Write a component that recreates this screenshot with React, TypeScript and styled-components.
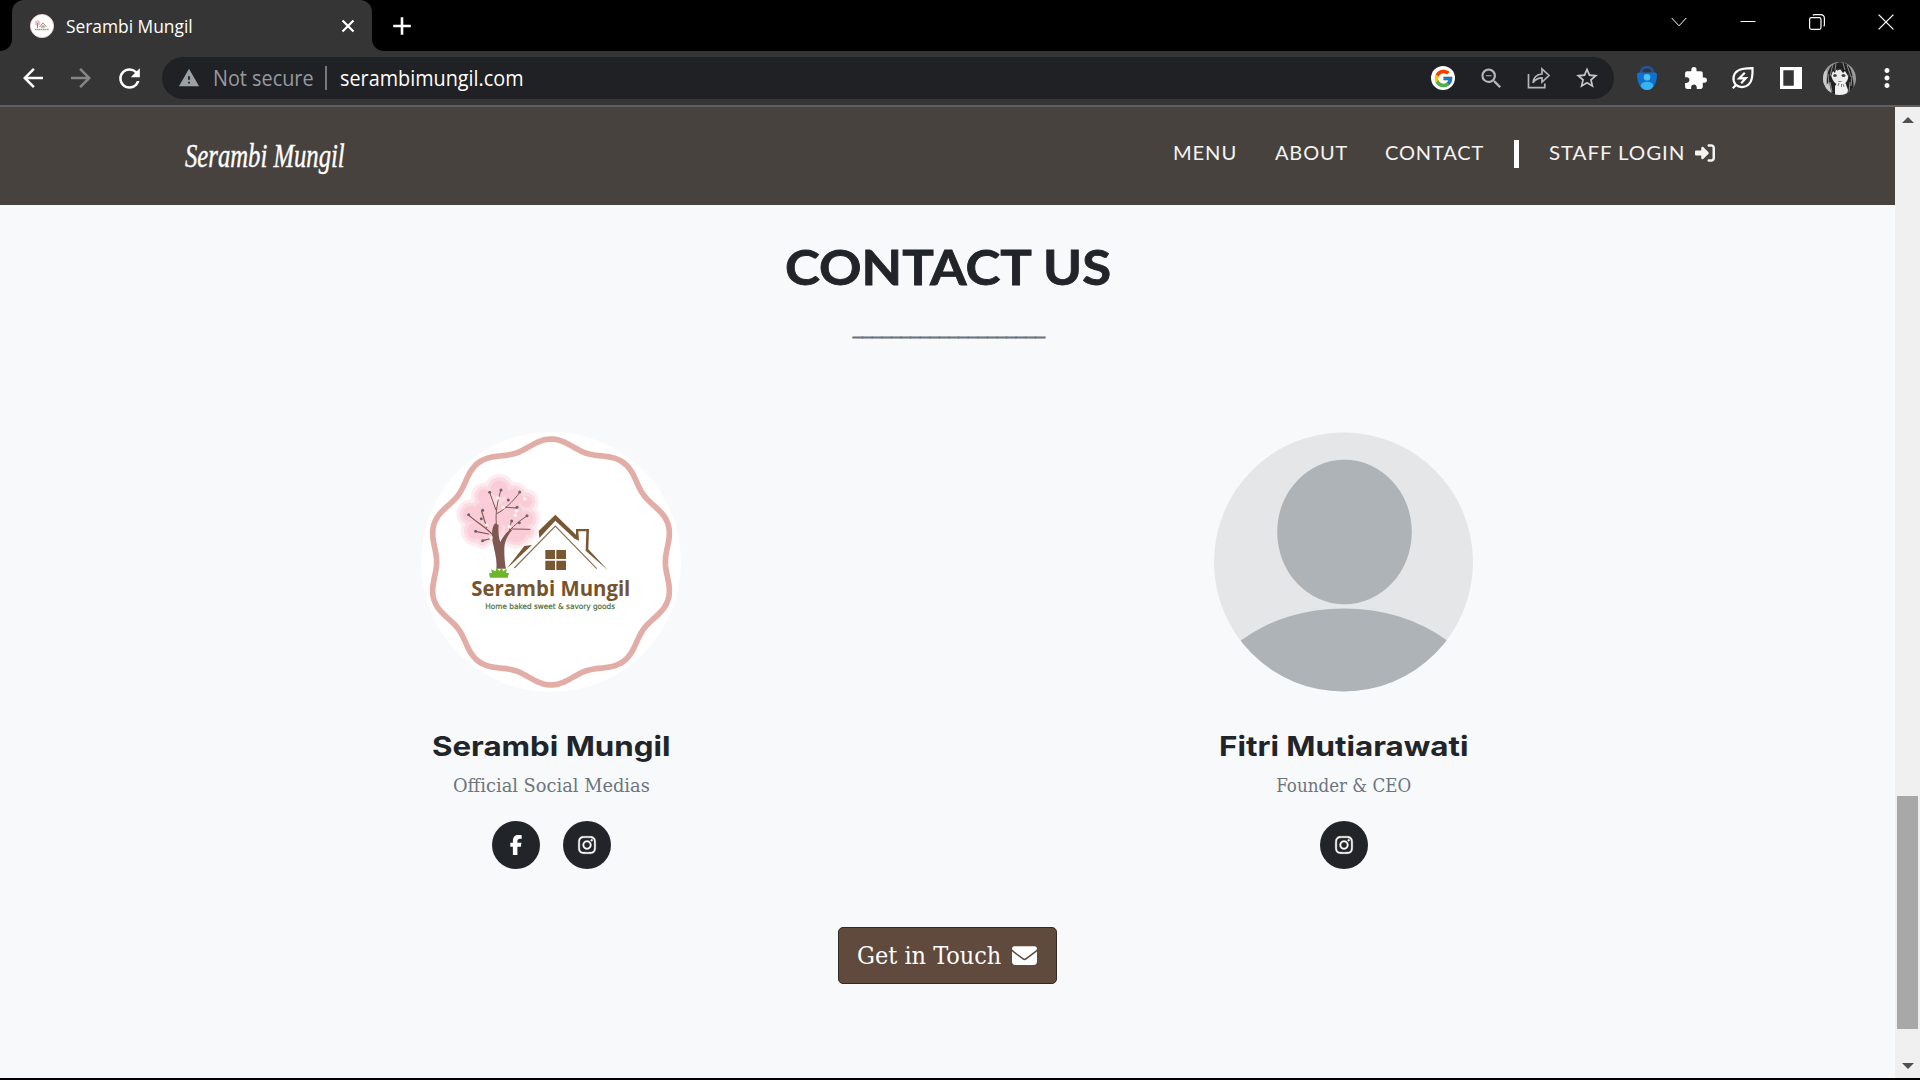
import React, { useLayoutEffect, useRef, useState } from 'react';
import styled, { createGlobalStyle } from 'styled-components';
import { MdArrowBack, MdArrowForward, MdRefresh, MdWarning, MdZoomOut, MdStarBorder, MdExtension, MdMoreVert } from 'react-icons/md';
import { FcGoogle } from 'react-icons/fc';
import { FaFacebookF, FaInstagram, FaEnvelope, FaRightToBracket } from 'react-icons/fa6';

const Global = createGlobalStyle`
  * { box-sizing: border-box; }
  body { margin: 0; background: #000; overflow: hidden; }
`;

const ui = `'Open Sans', 'Noto Sans', sans-serif`;
const display = `Lato, 'Open Sans', sans-serif`;
const slab = `'DejaVu Serif Condensed', 'DejaVu Serif', serif`;

/* Text that is stretched or condensed to an exact width */
const FitBox = styled.span<{ $w: number }>`
  display: inline-block;
  width: ${p => p.$w}px;
  text-align: left;
  white-space: nowrap;
`;
const FitInner = styled.span`
  display: inline-block;
  transform-origin: 0 50%;
`;
function Fit({ w, children }: { w: number; children: React.ReactNode }) {
  const ref = useRef<HTMLSpanElement>(null);
  const [scale, setScale] = useState(1);
  useLayoutEffect(() => {
    if (ref.current) setScale(w / ref.current.offsetWidth);
  }, [w]);
  return (
    <FitBox $w={w}>
      <FitInner ref={ref} style={{ transform: `scaleX(${scale})` }}>{children}</FitInner>
    </FitBox>
  );
}

const Window = styled.div`
  width: 1920px;
  height: 1080px;
  display: flex;
  flex-direction: column;
  background: #000;
  font-family: ${ui};
`;

/* ---- Tab strip ---- */
const TabStrip = styled.div`
  height: 51px;
  display: flex;
  flex: none;
`;
const Flare = styled.div<{ $side: 'left' | 'right' }>`
  width: 12px;
  height: 12px;
  align-self: flex-end;
  background: radial-gradient(circle at ${p => (p.$side === 'left' ? '0 0' : '100% 0')}, #000 11.5px, #353535 12.5px);
`;
const Tab = styled.div`
  width: 360px;
  display: flex;
  align-items: center;
  padding: 1px 17px 0 18px;
  background: #353535;
  border-radius: 12px 12px 0 0;
  color: #fff;
  font-size: 17.5px;
  line-height: 24px;
`;
const Favicon = styled.svg`
  width: 24px;
  height: 24px;
  margin-right: 11.5px;
`;
const TabTitle = styled.div`
  flex: 1;
`;
const NewTab = styled.div`
  width: 42px;
  display: grid;
  place-items: center;
`;
const Controls = styled.div`
  display: flex;
  margin-left: auto;
  height: 43px;
`;
const Control = styled.div`
  width: 69px;
  display: grid;
  place-items: center;
`;

/* ---- Toolbar ---- */
const Toolbar = styled.div`
  height: 56px;
  flex: none;
  display: flex;
  align-items: center;
  padding: 0 9px;
  background: #353535;
  border-bottom: 2px solid #5f5f5f;
`;
const IconCell = styled.div<{ $color?: string }>`
  width: 48px;
  height: 42px;
  display: grid;
  place-items: center;
  color: ${p => p.$color || '#fff'};
`;
const TabCell = styled.div`
  width: 36px;
  height: 42px;
  margin-right: 6px;
  display: grid;
  place-items: center;
  color: #fff;
`;
const Omnibox = styled.div`
  flex: 1;
  height: 42px;
  margin: 0 9px;
  padding: 0 3px 0 16px;
  display: flex;
  align-items: center;
  border-radius: 21px;
  background: #202124;
  font-size: 21px;
  line-height: 28px;
  color: #fff;
`;
const NotSecure = styled.div`
  margin-left: 13px;
  color: #969ba0;
`;
const Separator = styled.div`
  width: 2px;
  height: 24px;
  margin: 0 13px 0 11px;
  background: #77797c;
`;
const Url = styled.div`
  flex: 1;
`;
const GoogleDisc = styled.div`
  width: 24px;
  height: 24px;
  border-radius: 50%;
  background: #fff;
  display: grid;
  place-items: center;
`;

/* ---- Page ---- */
const Viewport = styled.div`
  height: 971px;
  display: flex;
`;
const Page = styled.main`
  flex: 1;
  background: #f8f9fb;
  display: flex;
  flex-direction: column;
  align-items: center;
`;
const Navbar = styled.header`
  width: 100%;
  height: 98px;
  flex: none;
  padding: 0 181px 0 185px;
  display: flex;
  justify-content: space-between;
  background: #48423e;
  color: #fff;
`;
const Brand = styled.div`
  padding-top: 27px;
  font: italic 33px/44px 'Liberation Serif', serif;
  -webkit-text-stroke: 0.4px #fff;
`;
const Nav = styled.nav`
  height: 28px;
  margin-top: 32px;
  display: flex;
  font: 400 18.6px/28px ${display};
  letter-spacing: 0.8px;
  color: #f4f3f2;
`;
const NavItem = styled.a<{ $gap: number }>`
  display: flex;
  align-items: center;
  margin-right: ${p => p.$gap}px;
`;
const NavBar = styled.div`
  width: 5px;
  height: 28px;
  margin: 1px 30px 0 0;
  background: #fff;
`;
const IconGap = styled.span`
  display: flex;
  margin-left: 10px;
`;
const Title = styled.h2`
  margin: 33px 0 0;
  font: 700 47px/58px ${display};
  -webkit-text-stroke: 0.8px #212529;
  color: #212529;
`;
const Rule = styled.div`
  margin: 19px 0 0 3px;
  font: 19.2px/29px 'Liberation Serif', serif;
  -webkit-text-stroke: 1px #6c757d;
  color: #6c757d;
`;
const Team = styled.section`
  width: 1585px;
  margin-top: 88px;
  display: grid;
  grid-template-columns: 1fr 1fr;
`;
const Member = styled.article`
  display: flex;
  flex-direction: column;
  align-items: center;
`;
const Portrait = styled.svg`
  width: 260px;
  height: 260px;
  display: block;
`;
const Name = styled.h4`
  margin: 37px 0 0;
  font: 700 27.6px/34px Inter, ${display};
  color: #212529;
`;
const Role = styled.p`
  margin: 8px 0 0;
  font: 18.6px/29px ${slab};
  color: #6c757d;
`;
const Socials = styled.div`
  margin-top: 21px;
  display: flex;
  gap: 23px;
`;
const Social = styled.a`
  width: 48px;
  height: 48px;
  border-radius: 50%;
  display: grid;
  place-items: center;
  background: #212529;
  color: #fff;
`;
const Cta = styled.a`
  width: 219px;
  height: 57px;
  margin-top: 58px;
  display: flex;
  align-items: center;
  justify-content: space-between;
  padding: 0 19px 0 18px;
  border: 1px solid #342a24;
  border-radius: 5px;
  background: #5f4a3d;
  color: #fff;
  font: 23.6px/36px ${slab};
`;

/* ---- Scrollbar ---- */
const Scrollbar = styled.div`
  width: 25px;
  display: flex;
  flex-direction: column;
  align-items: center;
  background: #f0f0f0;
`;
const Arrow = styled.div<{ $down?: boolean }>`
  margin: ${p => (p.$down ? 'auto 0 9px' : '10px 0 0')};
  border: 6px solid transparent;
  border-top: ${p => (p.$down ? '6px solid #505050' : '0')};
  border-bottom: ${p => (p.$down ? '0' : '6px solid #505050')};
`;
const Thumb = styled.div`
  width: 21px;
  height: 233px;
  margin-top: 673px;
  background: #a8a8a8;
`;

const badgePath = (() => {
  const pts: string[] = [];
  for (let i = 0; i < 360; i += 2) {
    const a = (i * Math.PI) / 180;
    const r = 356 + 13 * Math.cos(10 * a);
    pts.push(`${(455 + r * Math.sin(a)).toFixed(1)} ${(456 - r * Math.cos(a)).toFixed(1)}`);
  }
  return `M${pts.join('L')}Z`;
})();

const blobs = [[300, 238, 38], [255, 258, 32], [345, 262, 38], [380, 275, 30], [215, 312, 36], [260, 310, 50], [330, 310, 52], [380, 325, 34], [230, 362, 38], [350, 362, 46], [275, 350, 46], [385, 365, 22], [250, 387, 22]];
const buds = [[271, 247], [305, 240], [361, 246], [353, 292], [208, 314], [250, 301], [246, 326], [383, 317], [360, 338], [229, 364], [250, 392], [327, 270], [337, 333]];
const petals = [[376, 266], [296, 264], [352, 303], [275, 383], [330, 350], [262, 345], [312, 292], [348, 316]];

function Artwork() {
  return (
    <>
      <g>
        {blobs.map(([x, y, r], i) => <circle key={i} cx={x} cy={y} r={r + 8} fill="#fdecf0" />)}
        {blobs.map(([x, y, r], i) => <circle key={i} cx={x} cy={y} r={r - 2} fill="#fbdbe3" />)}
        {blobs.map(([x, y, r], i) => <circle key={i} cx={x} cy={y} r={r - 12} fill="#f9ccd7" />)}
      </g>
      <path d="M291 476C294 450 286 425 280 395C276 370 278 350 287 340L298 345C296 365 298 385 303 396C310 380 322 368 335 358L338 361C322 378 314 400 315 420C315 445 317 460 320 476Z" fill="#7d5750" />
      <g fill="none" stroke="#7d5750" strokeLinecap="round">
        <path d="M292 350C288 320 290 290 304 242M290 300L272 250M294 310C315 300 340 275 361 248M318 292L352 294" strokeWidth="3" />
        <path d="M283 378C262 352 235 340 209 316M262 352L247 304M268 372L228 364M280 384L250 392" strokeWidth="3.6" />
        <path d="M320 372C342 350 355 335 383 318M338 357L392 358M330 362L336 334" strokeWidth="3" />
      </g>
      {buds.map(([x, y], i) => <circle key={i} cx={x} cy={y} r="4.5" fill="#6c666c" />)}
      {petals.map(([x, y], i) => <circle key={i} cx={x} cy={y} r="5.5" fill="#fff3ee" />)}
      <path d="M272 503L269 490L278 489L275 478L288 484L292 474L300 483L308 472L311 484L323 476L320 488L329 490L325 503Z" fill="#6db52b" />
      <path d="M418 363L468 314L530 374V357H569L567 418L626 481L559 422L561 364H537L539 392L526 386L468 332L420 384Z" fill="#7a5733" />
      <path d="M322 476L375 408L398 405Z" fill="#7a5733" />
      <path d="M345 474L468 348L592 476" fill="none" stroke="#8b6e50" strokeWidth="3.5" />
      <path d="M438 420h29v27h-29zM471 420h29v27h-29zM438 452h29v28h-29zM471 452h29v28h-29z" fill="#7a5733" />
      <text x="216" y="557" fontFamily="Open Sans, sans-serif" fontWeight="700" fontSize="66" fill="#75532f" textLength="477" lengthAdjust="spacingAndGlyphs">Serambi Mungil</text>
      <text x="258" y="596" fontFamily="DejaVu Sans, sans-serif" fontSize="23" fill="#4b6f3a" stroke="#4b6f3a" strokeWidth=".6" textLength="389" lengthAdjust="spacingAndGlyphs">Home baked sweet &amp; savory goods</text>
    </>
  );
}

function Badge() {
  return (
    <Portrait viewBox="65 66 780 780">
      <circle cx="455" cy="456" r="390" fill="#fff" />
      <path d={badgePath} fill="none" stroke="#e2ada6" strokeWidth="17" strokeLinejoin="round" />
      <Artwork />
    </Portrait>
  );
}

function Placeholder() {
  return (
    <Portrait viewBox="0 0 260 260">
      <defs><clipPath id="disc"><circle cx="129.5" cy="130" r="129.5" /></clipPath></defs>
      <g clipPath="url(#disc)">
        <rect width="260" height="260" fill="#e4e6e8" />
        <ellipse cx="130.5" cy="100" rx="67.3" ry="72.3" fill="#aeb3b7" />
        <ellipse cx="130" cy="286" rx="146" ry="109.5" fill="#aeb3b7" />
      </g>
    </Portrait>
  );
}

function Line({ size, w = 1.4, d }: { size: number; w?: number; d: string }) {
  return (
    <svg width={size} height={size} viewBox={`0 0 ${size} ${size}`} fill="none" stroke="currentColor" strokeWidth={w}>
      <path d={d} />
    </svg>
  );
}

const instagram = <Social><FaInstagram size={20} stroke="#fff" strokeWidth={8} /></Social>;

export default function App() {
  return (
    <Window>
      <Global />
      <TabStrip>
        <Flare $side="left" />
        <Tab>
          <Favicon viewBox="0 0 24 24">
            <circle cx="12" cy="12" r="11.6" fill="#fff" stroke="#edd3d0" strokeWidth=".8" />
            <circle cx="7.5" cy="9" r="2.8" fill="#eec3cb" />
            <path d="M7.5 9v5M9.5 13l3.5-4 3.5 4M12 14v-2h2v2" stroke="#927a68" strokeWidth=".9" fill="none" />
            <path d="M5 15.5h14" stroke="#a79683" strokeWidth="1.5" strokeDasharray="1.5 .4" />
          </Favicon>
          <TabTitle><Fit w={127}>Serambi Mungil</Fit></TabTitle>
          <Line size={14} w={2.2} d="M1.5 1.5L12.5 12.5M12.5 1.5L1.5 12.5" />
        </Tab>
        <Flare $side="right" />
        <NewTab><TabCell><Line size={20} w={2.6} d="M10 1.2V18.8M1.2 10H18.8" /></TabCell></NewTab>
        <Controls>
          <Control><IconCell><Line size={16} w={1} d="M.7 4L8 11.8L15.3 4" /></IconCell></Control>
          <Control><IconCell><Line size={16} w={1} d="M.5 7.5H15.5" /></IconCell></Control>
          <Control><IconCell><Line size={16} w={1.2} d="M2.4 3.7H10.2Q12 3.7 12 5.5V13.5Q12 15.3 10.2 15.3H2.4Q.6 15.3 .6 13.5V5.5Q.6 3.7 2.4 3.7ZM3.8 1.2Q4.5 .6 5.5 .6H11.5Q15.4 .6 15.4 4.5V10.5Q15.4 11.8 14.7 12.4" /></IconCell></Control>
          <Control><IconCell><Line size={16} w={1.3} d="M.6 .6L15.4 15.4M15.4 .6L.6 15.4" /></IconCell></Control>
        </Controls>
      </TabStrip>

      <Toolbar>
        <IconCell><MdArrowBack size={30} /></IconCell>
        <IconCell $color="#868686"><MdArrowForward size={30} /></IconCell>
        <IconCell><MdRefresh size={31} /></IconCell>
        <Omnibox>
          <MdWarning size={22} color="#9aa0a6" />
          <NotSecure><Fit w={101}>Not secure</Fit></NotSecure>
          <Separator />
          <Url><Fit w={184}>serambimungil.com</Fit></Url>
          <IconCell><GoogleDisc><FcGoogle size={21} /></GoogleDisc></IconCell>
          <IconCell $color="#b4b5b7"><MdZoomOut size={27} /></IconCell>
          <IconCell $color="#b4b5b7">
            <Line size={24} w={1.7} d="M1.500 8V21.700H17.800V17.500M6 16.800C6.600 10.800 9.600 8.400 15 8V3L22 9.500L15 16V11.800C11 11.800 8.500 13 6 16.800Z" />
          </IconCell>
          <IconCell $color="#c4c5c6"><MdStarBorder size={26} /></IconCell>
        </Omnibox>
        <IconCell>
          <svg width="20" height="24" viewBox="0 0 20 24">
            <path d="M4 8V6.500a6 5.500 0 0 1 12 0V8" fill="none" stroke="#24549b" strokeWidth="2.600" />
            <path d="M2 6.500H18Q20 6.500 20 8.500C20 16 17 24 10 24S0 16 0 8.500Q0 6.500 2 6.500Z" fill="#1070cc" />
            <circle cx="10" cy="11.200" r="3.300" fill="#4fc0f4" />
            <path d="M3.600 20C4 17 7 15.800 10 15.800S16 17 16.400 20C15 22.500 13 24 10 24S5 22.500 3.600 20Z" fill="#37b3f0" />
          </svg>
        </IconCell>
        <IconCell><MdExtension size={25} /></IconCell>
        <IconCell>
          <Line size={24} w={2.2} d="M1.800 22.200L5 19M4.600 18.700C1 14 2 7.500 7 4.600C11 2.300 16 2.200 21.500 2.200C21.600 7 21.800 12 19.500 16C16 21.800 9 22.500 4.600 18.700M13.800 6.800L8.300 12.300L14.800 12.100L10.200 17.200" />
        </IconCell>
        <IconCell>
          <svg width="22" height="22" viewBox="0 0 22 22"><path fillRule="evenodd" d="M0 0H22V22H0ZM3.300 3.300V18.700H13.800V3.300Z" fill="#fff" /></svg>
        </IconCell>
        <IconCell>
          <svg width="33" height="33" viewBox="0 0 33 33">
            <defs><clipPath id="me"><circle cx="16.500" cy="16.500" r="16.500" /></clipPath></defs>
            <g clipPath="url(#me)">
              <rect width="33" height="33" fill="#9a9a9a" />
              <path d="M5 33C3 20 3 6 11 2S27 1 29 12C31 20 31 28 29 33Z" fill="#222" />
              <path d="M0 10L4 8L3 24L0 22ZM2 24L6 20L9 33H3Z" fill="#c9c9c9" />
              <path d="M8 11C10 7 23 6 25 11C26 17 24 21 18 24C12 23 8 17 8 11Z" fill="#ececec" />
              <path d="M12 24L15 20L22 20L25 28L24 33H12Z" fill="#f1f1f1" />
              <path d="M8 14V7L14 3L12 11L10 9ZM14 9L16 3L18 8L20 3L26 9L25 14L22 9L20 11L17 7Z" fill="#222" />
              <ellipse cx="12" cy="13.500" rx="1.800" ry="1.500" fill="#444" /><ellipse cx="20.500" cy="13.500" rx="2" ry="1.500" fill="#444" />
              <path d="M15.500 19.500h3M15 24l1-3M18.500 25v-3M21 25l-1-3" stroke="#666" strokeWidth=".8" />
              <path d="M10 2L7 14M13 1L12 8M20 1L22 8M24 3L28 15M7 20L9 30M27 20L26 30M5 12L6 24M29 14L28 24" stroke="#aaa" strokeWidth=".8" />
            </g>
          </svg>
        </IconCell>
        <IconCell><MdMoreVert size={30} /></IconCell>
      </Toolbar>

      <Viewport>
        <Page>
          <Navbar>
            <Brand><Fit w={160}>Serambi Mungil</Fit></Brand>
            <Nav>
              <NavItem $gap={38}><Fit w={64}>MENU</Fit></NavItem>
              <NavItem $gap={37}><Fit w={73}>ABOUT</Fit></NavItem>
              <NavItem $gap={30}><Fit w={99}>CONTACT</Fit></NavItem>
              <NavBar />
              <NavItem $gap={0}><Fit w={136}>STAFF LOGIN</Fit></NavItem>
              <NavItem $gap={-1}><IconGap><FaRightToBracket size={20} /></IconGap></NavItem>
            </Nav>
          </Navbar>
          <Title><Fit w={326}>CONTACT US</Fit></Title>
          <Rule><Fit w={192}>____________________</Fit></Rule>
          <Team>
            <Member>
              <Badge />
              <Name><Fit w={238}>Serambi Mungil</Fit></Name>
              <Role><Fit w={197}>Official Social Medias</Fit></Role>
              <Socials><Social><FaFacebookF size={20} /></Social>{instagram}</Socials>
            </Member>
            <Member>
              <Placeholder />
              <Name><Fit w={250}>Fitri Mutiarawati</Fit></Name>
              <Role><Fit w={135}>Founder &amp; CEO</Fit></Role>
              <Socials>{instagram}</Socials>
            </Member>
          </Team>
          <Cta><Fit w={144}>Get in Touch</Fit><FaEnvelope size={25} /></Cta>
        </Page>
        <Scrollbar>
          <Arrow />
          <Thumb />
          <Arrow $down />
        </Scrollbar>
      </Viewport>
    </Window>
  );
}
